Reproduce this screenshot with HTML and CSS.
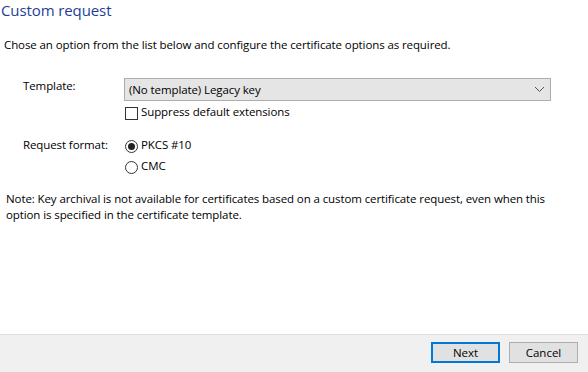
FILE: index.html
```html
<!DOCTYPE html>
<html>
<head>
<meta charset="utf-8">
<link rel="stylesheet" href="styles.css">
</head>
<body>
<div class="dialog">
  <main class="content">
    <h1 class="title">Custom request</h1>
    <p class="intro">Chose an option from the list below and configure the certificate options as required.</p>
    <div class="form">
      <div class="label">Template:</div>
      <div class="field">
        <div class="combo">
          <span class="combo-text">(No template) Legacy key</span>
          <svg class="chev" width="11" height="7" viewBox="0 0 11 7"><path d="M1 1 L5.5 5.5 L10 1" fill="none" stroke="#555" stroke-width="1"/></svg>
        </div>
        <label class="check-row"><span class="checkbox"></span><span>Suppress default extensions</span></label>
      </div>
      <div class="label label-format">Request format:</div>
      <div class="field field-format">
        <label class="radio-row"><span class="radio checked"></span><span>PKCS #10</span></label>
        <label class="radio-row"><span class="radio"></span><span>CMC</span></label>
      </div>
    </div>
    <p class="note">Note: Key archival is not available for certificates based on a custom certificate request, even when this option is specified in the certificate template.</p>
  </main>
  <footer class="footer">
    <button class="btn btn-default">Next</button>
    <button class="btn">Cancel</button>
  </footer>
</div>
</body>
</html>
```

FILE: styles.css
```css
* { box-sizing: border-box; }
html, body { margin: 0; padding: 0; background: #fff; }
body {
  font-family: "Open Sans", "Noto Sans", sans-serif;
  font-size: 11.5px;
  letter-spacing: -0.1px;
  line-height: 16px;
  color: #000;
}
.dialog {
  width: 588px;
  height: 372px;
  display: flex;
  flex-direction: column;
}
.content {
  flex: 1;
  display: flex;
  flex-direction: column;
}
.title {
  margin: 0 0 0 1px;
  font-size: 15px;
  line-height: 20px;
  font-weight: 400;
  color: #1e3f96;
}
.intro {
  margin: 17px 0 0 4px;
}
.form {
  margin-top: 25px;
  display: grid;
  grid-template-columns: 101px 1fr;
  padding-left: 23px;
  row-gap: 17px;
}
.field {
  display: flex;
  flex-direction: column;
  align-items: flex-start;
}
.combo {
  width: 427px;
  height: 23px;
  border: 1px solid #adadad;
  background: #e5e5e5;
  display: flex;
  align-items: center;
  justify-content: space-between;
  padding: 0 4px 0 4px;
  line-height: 21px;
}
.chev { margin-right: 1px; }
.check-row, .radio-row {
  display: flex;
  align-items: flex-start;
  gap: 3px;
}
.check-row { margin-top: 3px; }
.checkbox {
  width: 13px;
  height: 13px;
  margin: 3px 0 0 1px;
  border: 1px solid #333;
  background: #fff;
}
.field-format { gap: 5px; }
.radio {
  width: 13px;
  height: 13px;
  margin: 3px 0 0 1px;
  border: 1px solid #333;
  border-radius: 50%;
  background: #fff;
  display: flex;
  align-items: center;
  justify-content: center;
}
.radio.checked::after {
  content: "";
  width: 7px;
  height: 7px;
  border-radius: 50%;
  background: #222;
}
.note {
  margin: 17px 0 0 6px;
  width: 560px;
}
.footer {
  height: 38px;
  border-top: 1px solid #dfdfdf;
  background: #f0f0f0;
  display: flex;
  justify-content: flex-end;
  align-items: flex-start;
  gap: 9px;
  padding: 7px 10px 0 0;
}
.btn {
  width: 69px;
  height: 21px;
  border: 1px solid #adadad;
  background: #e1e1e1;
  font-family: inherit;
  font-size: 11.5px;
  line-height: 16px;
  color: #000;
  padding: 0;
}
.btn-default {
  border: 2px solid #0078d7;
}
```
